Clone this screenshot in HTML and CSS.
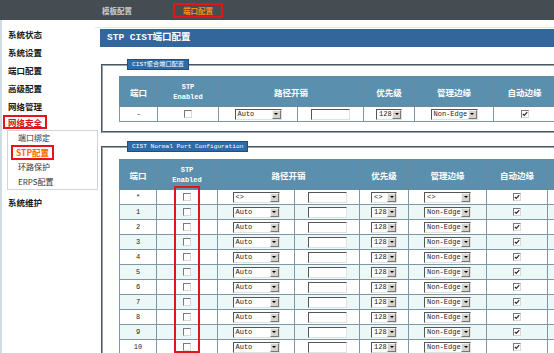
FILE: index.html
```html
<!DOCTYPE html>
<html lang="zh-CN">
<head>
    <meta charset="UTF-8">
    <meta name="viewport" content="width=device-width, initial-scale=1.0">
    <title>STP CIST端口配置</title>
    <link rel="stylesheet" href="styles.css">
</head>
<body>
    <div class="topbar">
        <span class="tab">模板配置</span>
        <span class="tab tab-active">端口配置</span>
    </div>

    <div class="page">
        <div class="side">
            <div class="nav-item">系统状态</div>
            <div class="nav-item">系统设置</div>
            <div class="nav-item">端口配置</div>
            <div class="nav-item">高级配置</div>
            <div class="nav-item">网络管理</div>
            <div class="nav-alert-row"><span class="nav-alert">网络安全</span></div>
            <div class="submenu">
                <div class="sub-item">端口绑定</div>
                <div class="sub-item sub-active-row"><span class="sub-active">STP配置</span></div>
                <div class="sub-item">环路保护</div>
                <div class="sub-item">ERPS配置</div>
            </div>
            <div class="nav-item nav-last">系统维护</div>
        </div>

        <div class="main">
            <div class="title-bar">STP CIST端口配置</div>

            <fieldset class="box box-first">
                <legend>CIST聚合端口配置</legend>
                <table class="grid grid-agg">
                    <colgroup>
                        <col style="width:38px"><col style="width:61px"><col style="width:79px"><col style="width:66px">
                        <col style="width:51px"><col style="width:79px"><col style="width:62px">
                    </colgroup>
                    <thead>
                        <tr>
                            <th>端口</th>
                            <th class="th-latin">STP<br>Enabled</th>
                            <th colspan="2">路径开销</th>
                            <th>优先级</th>
                            <th>管理边缘</th>
                            <th>自动边缘</th>
                        </tr>
                    </thead>
                    <tbody>
                        <tr>
                            <td>-</td>
                            <td><span class="chk"></span></td>
                            <td><span class="sel sel-wide"><span class="sel-text">Auto</span><span class="sel-btn"></span></span></td>
                            <td><span class="txt"></span></td>
                            <td><span class="sel sel-pri"><span class="sel-text">128</span><span class="sel-btn"></span></span></td>
                            <td><span class="sel sel-wide"><span class="sel-text">Non-Edge</span><span class="sel-btn"></span></span></td>
                            <td><span class="chk chk-on"><svg viewBox="0 0 6 6" width="6" height="6"><polyline points="0.8,2.8 2.3,4.4 5.2,1.2" fill="none" stroke="#222" stroke-width="1.1"/></svg></span></td>
                        </tr>
                    </tbody>
                </table>
            </fieldset>

            <fieldset class="box box-second">
                <legend>CIST Normal Port Configuration</legend>
                <div class="tbl-wrap">
                    <table class="grid grid-ports">
                        <colgroup>
                            <col style="width:37px"><col style="width:61px"><col style="width:77px"><col style="width:65px">
                            <col style="width:49px"><col style="width:78px"><col style="width:61px"><col style="width:40px">
                        </colgroup>
                        <thead>
                            <tr>
                                <th rowspan="2">端口</th>
                                <th rowspan="2" class="th-latin">STP<br>Enabled</th>
                                <th rowspan="2" colspan="2">路径开销</th>
                                <th rowspan="2">优先级</th>
                                <th rowspan="2">管理边缘</th>
                                <th rowspan="2">自动边缘</th>
                                <th class="th-half"></th>
                            </tr>
                            <tr>
                                <th class="th-half"></th>
                            </tr>
                        </thead>
                        <tbody id="port-rows"></tbody>
                    </table>
                    <div class="mark"></div>
                </div>
            </fieldset>
        </div>
    </div>

    <script>
        const rows = document.getElementById('port-rows');
        const check = '<svg viewBox="0 0 6 6" width="6" height="6"><polyline points="0.8,2.8 2.3,4.4 5.2,1.2" fill="none" stroke="#222" stroke-width="1.1"/></svg>';

        function addRow(port, cost, prio, edge, odd) {
            const tr = document.createElement('tr');
            if (odd) tr.className = 'alt';
            tr.innerHTML =
                '<td>' + port + '</td>' +
                '<td><span class="chk"></span></td>' +
                '<td><span class="sel sel-wide"><span class="sel-text">' + cost + '</span><span class="sel-btn"></span></span></td>' +
                '<td><span class="txt"></span></td>' +
                '<td><span class="sel sel-pri"><span class="sel-text">' + prio + '</span><span class="sel-btn"></span></span></td>' +
                '<td><span class="sel sel-wide"><span class="sel-text">' + edge + '</span><span class="sel-btn"></span></span></td>' +
                '<td><span class="chk chk-on">' + check + '</span></td>' +
                '<td></td>';
            rows.appendChild(tr);
        }

        addRow('*', '&lt;&gt;', '&lt;&gt;', '&lt;&gt;', false);
        for (let i = 1; i <= 10; i++) {
            addRow(i, 'Auto', '128', 'Non-Edge', i % 2 === 1);
        }
    </script>
</body>
</html>
```

FILE: styles.css
```css
body {
    margin: 0;
    width: 554px;
    height: 353px;
    overflow: hidden;
    background-color: #fff;
    font-family: "Noto Sans CJK SC", sans-serif;
    color: #222;
}


/* Top tabs */
.topbar {
    height: 20px;
    background-color: #454d52;
    display: flex;
    align-items: center;
    padding-left: 102px;
}


.tab {
    font-size: 7.5px;
    font-weight: bold;
    color: #c9cdd0;
    line-height: 11px;
}


.tab-active {
    margin-left: 41px;
    width: 46px;
    text-align: center;
    border: 2px solid #e3141b;
    color: #ff8a12;
}


.page {
    display: flex;
}


/* Left menu */
.side {
    flex: none;
    width: 93px;
    height: 333px;
    border-left: 2px solid #cfdce4;
    padding-top: 5px;
    box-sizing: content-box;
}


.nav-item {
    font-size: 8.5px;
    font-weight: bold;
    line-height: 18px;
    padding-left: 6px;
    color: #1a1a1a;
}


.nav-alert-row {
    display: flex;
    align-items: flex-start;
    height: 15px;
    padding-left: 1px;
    font-size: 8.5px;
}


.nav-alert {
    display: block;
    padding: 0 3px;
    border: 2px solid #e3141b;
    color: #d6141b;
    font-size: 8.5px;
    font-weight: bold;
    line-height: 10px;
}


.submenu {
    margin-left: 5px;
    width: 89px;
    height: 58px;
    border: 1px solid #d4d4d4;
}


.sub-item {
    font-size: 8px;
    line-height: 14.5px;
    height: 14.5px;
    padding-left: 10px;
    color: #333;
}


.sub-active-row {
    display: flex;
    align-items: center;
    padding-left: 3px;
}


.sub-active {
    display: block;
    padding: 0 3px;
    border: 2px solid #e3141b;
    color: #ff6a00;
    font-weight: bold;
    font-size: 8.5px;
    line-height: 11px;
}


.nav-last {
    margin-top: 3px;
}


/* Main area */
.main {
    flex: none;
    width: 560px;
    margin-top: 7px;
    border-top: 1px solid #e4e8ec;
    padding: 1px 0 0 5px;
}


.title-bar {
    height: 18px;
    line-height: 18px;
    padding-left: 7px;
    background-color: #33679b;
    color: #fff;
    font-family: "Liberation Mono", "Noto Sans CJK SC", monospace;
    font-size: 9.5px;
    font-weight: bold;
}


.box {
    margin: 12px 0 0 1px;
    padding: 6px 0 9px 16px;
    width: 560px;
    border: 2px groove #95a4ae;
    min-inline-size: 0;
}


.box-second {
    margin-top: 8px;
    padding-top: 7px;
    padding-bottom: 20px;
}


.box legend {
    margin-left: 8px;
    padding: 0 4px;
    height: 11px;
    box-sizing: border-box;
    border: 1px solid #1d4f80;
    background-color: #2f6ba7;
    color: #fff;
    font-family: "Liberation Mono", "Noto Sans CJK SC", monospace;
    font-size: 6.2px;
    line-height: 9px;
}


.tbl-wrap {
    position: relative;
}


/* Tables */
.grid {
    border-collapse: collapse;
    table-layout: fixed;
}


.grid-agg {
    width: 436px;
}


.grid-ports {
    width: 468px;
}


.grid th {
    background-color: #5b8fae;
    color: #fff;
    font-size: 8.5px;
    font-weight: bold;
    border: 1px solid #6b899b;
    height: 29px;
    padding: 0;
    text-align: center;
}


.grid th.th-latin {
    font-family: "Liberation Mono", monospace;
    font-size: 7px;
    line-height: 10px;
}


.grid th.th-half {
    height: 14px;
}


.grid td {
    height: 14px;
    padding: 0;
    border: 1px solid #7e97a6;
    text-align: center;
    font-family: "Liberation Mono", monospace;
    font-size: 7px;
    background-color: #fff;
}


.grid tr.alt td {
    background-color: #ecf7f8;
}


/* Old style form controls */
.sel {
    display: inline-flex;
    height: 11px;
    box-sizing: border-box;
    border: 1px solid;
    border-color: #555 #e2e2e2 #e2e2e2 #555;
    background-color: #fff;
    vertical-align: middle;
}


.sel-wide {
    width: 47px;
}


.sel-pri {
    width: 26px;
}


.sel-text {
    flex: 1;
    text-align: left;
    padding-left: 2px;
    font-size: 7px;
    line-height: 9px;
    white-space: nowrap;
    overflow: hidden;
}


.sel-btn {
    width: 9px;
    height: 9px;
    box-sizing: border-box;
    border: 1px solid;
    border-color: #f4f4f4 #777 #777 #f4f4f4;
    background-color: #d6d3cc;
    display: flex;
    align-items: center;
    justify-content: center;
}


.sel-btn::after {
    content: "";
    border-left: 2px solid transparent;
    border-right: 2px solid transparent;
    border-top: 2px solid #000;
}


.txt {
    display: inline-block;
    width: 39px;
    height: 11px;
    box-sizing: border-box;
    border: 1px solid;
    border-color: #555 #e2e2e2 #e2e2e2 #555;
    background-color: #fff;
    vertical-align: middle;
}


.chk {
    display: inline-flex;
    align-items: center;
    justify-content: center;
    width: 8px;
    height: 8px;
    box-sizing: border-box;
    border: 1px solid;
    border-color: #7a7a7a #d8d8d8 #d8d8d8 #7a7a7a;
    background-color: #fff;
    vertical-align: middle;
}


/* Annotation box over the STP column */
.mark {
    position: absolute;
    left: 55px;
    top: 27px;
    width: 26px;
    height: 167px;
    box-sizing: border-box;
    border: 2px solid #e3141b;
}
```
